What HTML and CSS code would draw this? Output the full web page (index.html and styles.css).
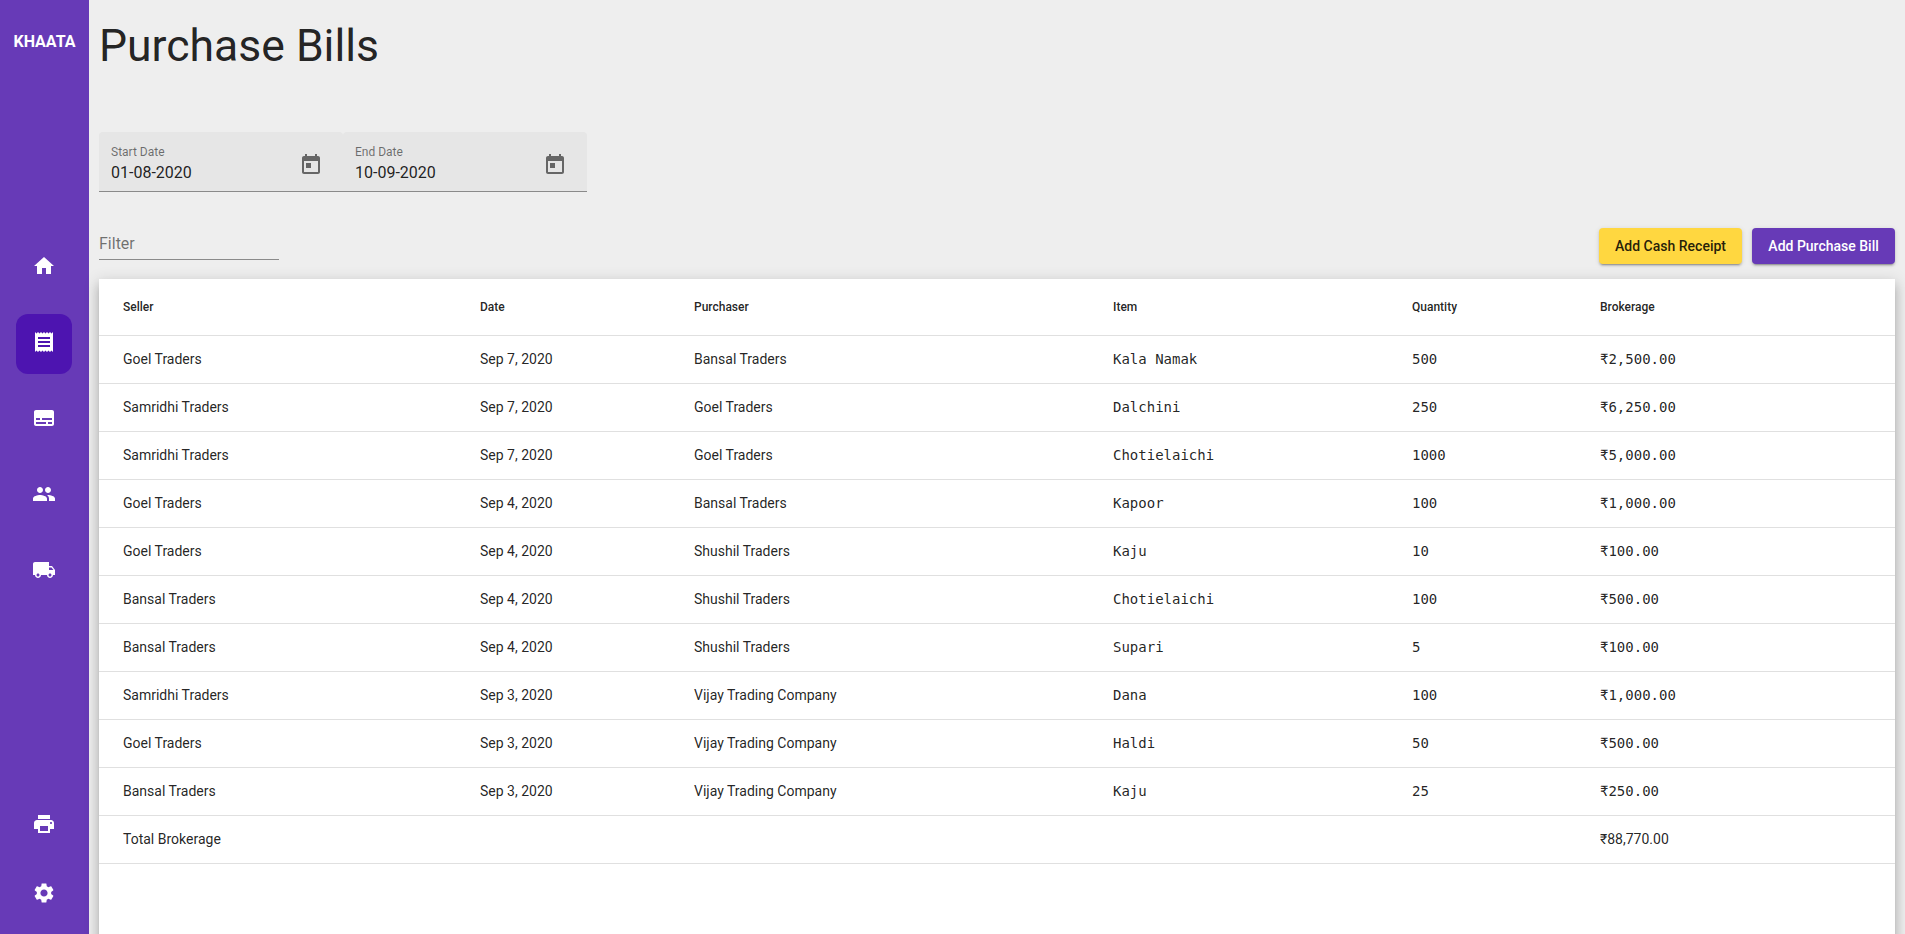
FILE: index.html
```html
<!DOCTYPE html>
<html lang="en">
<head>
<meta charset="utf-8">
<title>Purchase Bills</title>
<link rel="stylesheet" href="styles.css">
</head>
<body>
<div class="app">
  <nav class="sidebar">
    <div class="brand">KHAATA</div>
    <div class="nav-main">
      <a class="nav-item"><svg class="nav-icon" viewBox="0 0 24 24"><path d="M10 20v-6h4v6h5v-8h3L12 3 2 12h3v8z"/></svg></a>
      <a class="nav-item active"><svg class="nav-icon" viewBox="0 0 24 24"><path d="M18 17H6v-2h12v2zm0-4H6v-2h12v2zm0-4H6V7h12v2zM3 22l1.500-1.500L6 22l1.500-1.500L9 22l1.500-1.500L12 22l1.500-1.500L15 22l1.500-1.500L18 22l1.500-1.500L21 22V2l-1.500 1.500L18 2l-1.500 1.500L15 2l-1.500 1.500L12 2l-1.500 1.500L9 2 7.500 3.500 6 2 4.500 3.500 3 2v20z"/></svg></a>
      <a class="nav-item"><svg class="nav-icon" viewBox="0 0 24 24"><path d="M20 4H4c-1.100 0-2 .9-2 2v12c0 1.100.9 2 2 2h16c1.100 0 2-.9 2-2V6c0-1.100-.9-2-2-2zM4 12h4v2H4v-2zm10 6H4v-2h10v2zm6 0h-4v-2h4v2zm0-4H10v-2h10v2z"/></svg></a>
      <a class="nav-item"><svg class="nav-icon" viewBox="0 0 24 24"><path d="M16 11c1.660 0 2.990-1.340 2.990-3S17.660 5 16 5s-3 1.340-3 3 1.340 3 3 3zm-8 0c1.660 0 2.990-1.340 2.990-3S9.660 5 8 5 5 6.340 5 8s1.340 3 3 3zm0 2c-2.330 0-7 1.170-7 3.500V19h14v-2.500c0-2.330-4.670-3.500-7-3.500zm8 0c-.29 0-.62.02-.97.05 1.160.84 1.970 1.970 1.970 3.450V19h6v-2.500c0-2.330-4.670-3.500-7-3.500z"/></svg></a>
      <a class="nav-item"><svg class="nav-icon" viewBox="0 0 24 24"><path d="M20 8h-3V4H3c-1.100 0-2 .9-2 2v11h2c0 1.660 1.340 3 3 3s3-1.340 3-3h6c0 1.660 1.340 3 3 3s3-1.340 3-3h2v-5l-3-4zM6 18.500c-.83 0-1.500-.67-1.500-1.500s.67-1.500 1.500-1.500 1.500.67 1.500 1.500-.67 1.500-1.500 1.500zm13.500-9l1.960 2.500H17V9.500h2.500zm-1.500 9c-.83 0-1.500-.67-1.500-1.500s.67-1.500 1.500-1.500 1.500.67 1.500 1.500-.67 1.500-1.500 1.500z"/></svg></a>
    </div>
    <div class="nav-bottom">
      <a class="nav-item"><svg class="nav-icon" viewBox="0 0 24 24"><path d="M19 8H5c-1.660 0-3 1.340-3 3v6h4v4h12v-4h4v-6c0-1.660-1.340-3-3-3zm-3 11H8v-5h8v5zm3-7c-.55 0-1-.45-1-1s.45-1 1-1 1 .45 1 1-.45 1-1 1zm-1-9H6v4h12V3z"/></svg></a>
      <a class="nav-item"><svg class="nav-icon" viewBox="0 0 24 24"><path d="M19.140 12.940c.04-.3.06-.61.06-.94 0-.32-.02-.64-.07-.94l2.030-1.580c.18-.14.23-.41.120-.61l-1.920-3.320c-.12-.22-.37-.29-.59-.22l-2.390.96c-.5-.38-1.030-.7-1.620-.94l-.36-2.540c-.04-.24-.24-.41-.48-.41h-3.840c-.24 0-.43.17-.47.41l-.36 2.540c-.59.24-1.130.57-1.620.94l-2.390-.96c-.22-.08-.47 0-.59.22L2.740 8.870c-.12.21-.08.47.12.61l2.030 1.580c-.05.3-.09.63-.09.94s.02.64.07.94l-2.030 1.580c-.18.14-.23.41-.12.61l1.920 3.320c.12.22.37.29.59.22l2.390-.96c.5.38 1.030.7 1.620.94l.36 2.540c.05.24.24.41.48.41h3.840c.24 0 .44-.17.47-.41l.36-2.540c.59-.24 1.130-.56 1.620-.94l2.390.96c.22.08.47 0 .59-.22l1.920-3.320c.12-.22.07-.47-.12-.61l-2.010-1.580zM12 15.600c-1.980 0-3.600-1.620-3.600-3.600s1.620-3.600 3.600-3.600 3.600 1.620 3.600 3.600-1.620 3.600-3.600 3.600z"/></svg></a>
    </div>
  </nav>
  <main class="content">
    <h1 class="title">Purchase Bills</h1>
    <div class="date-range">
      <div class="date-field">
        <div class="date-text"><span class="date-label">Start Date</span><span class="date-value">01-08-2020</span></div>
        <svg class="cal-icon" viewBox="0 0 24 24"><path d="M19 3h-1V1h-2v2H8V1H6v2H5c-1.110 0-1.990.9-1.990 2L3 19c0 1.100.89 2 2 2h14c1.100 0 2-.9 2-2V5c0-1.100-.9-2-2-2zm0 16H5V8h14v11zM7 10h5v5H7z"/></svg>
      </div>
      <div class="date-field">
        <div class="date-text"><span class="date-label">End Date</span><span class="date-value">10-09-2020</span></div>
        <svg class="cal-icon" viewBox="0 0 24 24"><path d="M19 3h-1V1h-2v2H8V1H6v2H5c-1.110 0-1.990.9-1.990 2L3 19c0 1.100.89 2 2 2h14c1.100 0 2-.9 2-2V5c0-1.100-.9-2-2-2zm0 16H5V8h14v11zM7 10h5v5H7z"/></svg>
      </div>
    </div>
    <div class="toolbar">
      <div class="filter">Filter</div>
      <div class="actions">
        <button class="btn btn-accent">Add Cash Receipt</button>
        <button class="btn btn-primary">Add Purchase Bill</button>
      </div>
    </div>
    <div class="card">
      <table class="bills">
        <thead>
          <tr><th class="c1">Seller</th><th class="c2">Date</th><th class="c3">Purchaser</th><th class="c4">Item</th><th class="c5">Quantity</th><th class="c6">Brokerage</th></tr>
        </thead>
        <tbody>
          <tr><td>Goel Traders</td><td>Sep 7, 2020</td><td>Bansal Traders</td><td class="mono">Kala Namak</td><td class="mono">500</td><td class="mono">₹2,500.00</td></tr>
          <tr><td>Samridhi Traders</td><td>Sep 7, 2020</td><td>Goel Traders</td><td class="mono">Dalchini</td><td class="mono">250</td><td class="mono">₹6,250.00</td></tr>
          <tr><td>Samridhi Traders</td><td>Sep 7, 2020</td><td>Goel Traders</td><td class="mono">Chotielaichi</td><td class="mono">1000</td><td class="mono">₹5,000.00</td></tr>
          <tr><td>Goel Traders</td><td>Sep 4, 2020</td><td>Bansal Traders</td><td class="mono">Kapoor</td><td class="mono">100</td><td class="mono">₹1,000.00</td></tr>
          <tr><td>Goel Traders</td><td>Sep 4, 2020</td><td>Shushil Traders</td><td class="mono">Kaju</td><td class="mono">10</td><td class="mono">₹100.00</td></tr>
          <tr><td>Bansal Traders</td><td>Sep 4, 2020</td><td>Shushil Traders</td><td class="mono">Chotielaichi</td><td class="mono">100</td><td class="mono">₹500.00</td></tr>
          <tr><td>Bansal Traders</td><td>Sep 4, 2020</td><td>Shushil Traders</td><td class="mono">Supari</td><td class="mono">5</td><td class="mono">₹100.00</td></tr>
          <tr><td>Samridhi Traders</td><td>Sep 3, 2020</td><td>Vijay Trading Company</td><td class="mono">Dana</td><td class="mono">100</td><td class="mono">₹1,000.00</td></tr>
          <tr><td>Goel Traders</td><td>Sep 3, 2020</td><td>Vijay Trading Company</td><td class="mono">Haldi</td><td class="mono">50</td><td class="mono">₹500.00</td></tr>
          <tr><td>Bansal Traders</td><td>Sep 3, 2020</td><td>Vijay Trading Company</td><td class="mono">Kaju</td><td class="mono">25</td><td class="mono">₹250.00</td></tr>
          <tr><td>Total Brokerage</td><td></td><td></td><td></td><td></td><td>₹88,770.00</td></tr>
        </tbody>
      </table>
    </div>
  </main>
</div>
</body>
</html>
```
FILE: styles.css
```css
* { box-sizing: border-box; }
html, body { margin: 0; height: 100%; overflow: hidden; }
body { font-family: Roboto, "Helvetica Neue", sans-serif; background: #eeeeee; color: rgba(0,0,0,.87); }
.app { display: flex; height: 934px; overflow: hidden; }
.sidebar { width: 89px; flex: none; background: #673ab7; display: flex; flex-direction: column; align-items: center; height: 934px; padding-right: 1px; }
.brand { color: #fff; font-size: 16px; font-weight: 700; line-height: 24px; margin-top: 30px; margin-right: -1px; }
.nav-main { margin-top: 184px; display: flex; flex-direction: column; gap: 16px; }
.nav-bottom { margin-top: auto; margin-bottom: 9px; display: flex; flex-direction: column; gap: 9px; }
.nav-item { width: 56px; height: 60px; display: flex; align-items: center; justify-content: center; border-radius: 12px; }
.nav-item.active { background: #4d14b0; }
.nav-icon { width: 24px; height: 24px; fill: #fff; margin-bottom: 5px; }
.content { flex: 1; min-width: 0; padding: 0 10px; }
.title { margin: 22px 0 0; font-size: 44.500px; font-weight: 400; line-height: 48px; letter-spacing: 0; color: rgba(0,0,0,.87); }
.date-range { display: flex; width: 488px; height: 60px; margin-top: 62px; border-bottom: 1px solid #8a8a8a; }
.date-field { flex: 1; display: flex; align-items: center; justify-content: space-between; background: #e6e6e6; padding: 0 20px 0 12px; border-radius: 4px 4px 0 0; }
.date-text { display: flex; flex-direction: column; margin-top: 4px; }
.date-label { font-size: 12px; line-height: 14px; color: rgba(0,0,0,.54); margin-bottom: 4px; }
.date-value { font-size: 16px; line-height: 20px; }
.cal-icon { width: 24px; height: 24px; fill: #666; margin-top: 6px; }
.toolbar { display: flex; justify-content: space-between; align-items: flex-end; margin-top: 36px; }
.filter { width: 180px; height: 26px; margin-bottom: 4px; font-size: 16px; line-height: 20px; color: rgba(0,0,0,.54); border-bottom: 1px solid #8a8a8a; }
.actions { display: flex; gap: 10px; }
.btn { height: 36px; border: 0; border-radius: 4px; padding: 0 16.200px; font: 500 14px/36px Roboto, sans-serif; box-shadow: 0 3px 1px -2px rgba(0,0,0,.2), 0 2px 2px 0 rgba(0,0,0,.14), 0 1px 5px 0 rgba(0,0,0,.12); }
.btn-accent { background: #ffd740; color: rgba(0,0,0,.87); }
.btn-primary { background: #673ab7; color: #fff; }
.card { margin-top: 15px; background: #fff; height: 760px; box-shadow: 0 5px 5px -3px rgba(0,0,0,.2), 0 8px 10px 1px rgba(0,0,0,.14), 0 3px 14px 2px rgba(0,0,0,.12); }
.bills { width: 100%; border-collapse: collapse; table-layout: fixed; }
.bills th { height: 56px; padding: 0 0 0 24px; text-align: left; font-size: 12px; font-weight: 500; color: rgba(0,0,0,.87); border-bottom: 1px solid #e0e0e0; }
.bills td { height: 48px; padding: 0 0 0 24px; font-size: 14px; border-bottom: 1px solid #e0e0e0; }
.mono { font-family: "DejaVu Sans Mono", monospace; }
.c1 { width: 357px; }
.c2 { width: 214px; }
.c3 { width: 419px; }
.c4 { width: 299px; }
.c5 { width: 188px; }
```
